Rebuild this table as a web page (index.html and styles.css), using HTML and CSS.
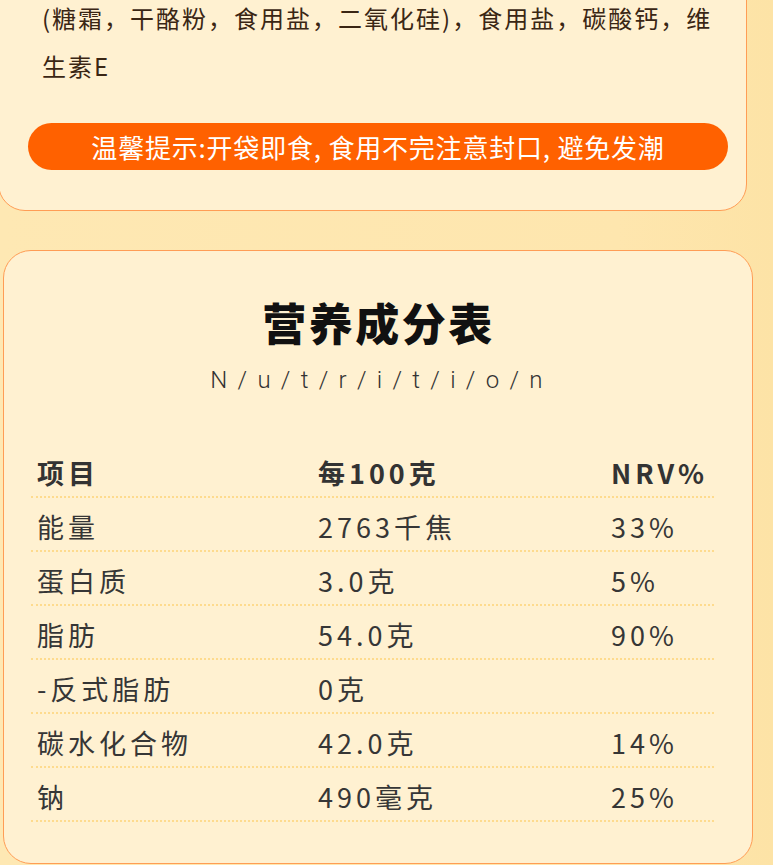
FILE: index.html
```html
<!DOCTYPE html>
<html lang="zh-CN">
<head>
<meta charset="utf-8">
<link rel="stylesheet" href="styles.css">
</head>
<body>
<div class="page">
  <section class="card card-ingredients">
    <p class="ingredients">(糖霜，干酪粉，食用盐，二氧化硅)，食用盐，碳酸钙，维生素E</p>
    <div class="tip">温馨提示:开袋即食, 食用不完注意封口, 避免发潮</div>
  </section>
  <section class="card card-nutrition">
    <h1 class="title">营养成分表</h1>
    <div class="subtitle">N/u/t/r/i/t/i/o/n</div>
    <div class="table">
      <div class="row head"><span>项目</span><span>每100克</span><span>NRV%</span></div>
      <div class="row"><span>能量</span><span>2763千焦</span><span>33%</span></div>
      <div class="row"><span>蛋白质</span><span>3.0克</span><span>5%</span></div>
      <div class="row"><span>脂肪</span><span>54.0克</span><span>90%</span></div>
      <div class="row"><span>-反式脂肪</span><span>0克</span><span></span></div>
      <div class="row"><span>碳水化合物</span><span>42.0克</span><span>14%</span></div>
      <div class="row"><span>钠</span><span>490毫克</span><span>25%</span></div>
    </div>
  </section>
</div>
</body>
</html>
```
FILE: styles.css
```css
html, body {
  margin: 0;
  padding: 0;
}
body {
  width: 773px;
  height: 865px;
  overflow: hidden;
  background: linear-gradient(90deg, #fee8b3 0%, #fee6ae 80%, #fde3a6 100%);
  font-family: "Noto Sans CJK SC", "Noto Sans", sans-serif;
}
.page {
  display: flex;
  flex-direction: column;
}
.card {
  background: #fff1d1;
  border: 1px solid #ff9d55;
  box-sizing: border-box;
}
.card-ingredients {
  margin-top: -40px;
  margin-left: -2px;
  width: 749px;
  border-radius: 0 0 27px 27px;
  padding: 33px 18px 40px 29px;
}
.ingredients {
  margin: 0 0 33px 14px;
  font-size: 24px;
  line-height: 48px;
  letter-spacing: 2px;
  color: #3a2614;
}
.tip {
  height: 47px;
  border-radius: 24px;
  background: #ff6100;
  color: #ffffff;
  font-size: 26px;
  letter-spacing: 0.8px;
  line-height: 47px;
  text-align: center;
}
.card-nutrition {
  margin-top: 39px;
  margin-left: 3px;
  width: 750px;
  border-radius: 28px;
  padding: 45px 38px 41px 27px;
}
.title {
  margin: 0;
  text-align: center;
  font-size: 44px;
  line-height: 53px;
  font-weight: 900;
  color: #111111;
  letter-spacing: 2.5px;
  padding-left: 12px;
}
.subtitle {
  margin-top: 16px;
  text-align: center;
  font-family: Roboto, "Noto Sans", sans-serif;
  font-weight: 300;
  font-size: 24px;
  line-height: 30px;
  letter-spacing: 10.3px;
  color: #333333;
  padding-left: 18px;
}
.table {
  margin-top: 49px;
  display: flex;
  flex-direction: column;
}
.row {
  display: grid;
  grid-template-columns: 281px 293px 1fr;
  height: 54px;
  box-sizing: border-box;
  padding: 15px 0 9px 6px;
  border-bottom: 2px dotted #fedb8e;
  font-size: 27px;
  line-height: 28px;
  letter-spacing: 4px;
  color: #363636;
}
.row.head {
  font-weight: 700;
  color: #333333;
}
```
